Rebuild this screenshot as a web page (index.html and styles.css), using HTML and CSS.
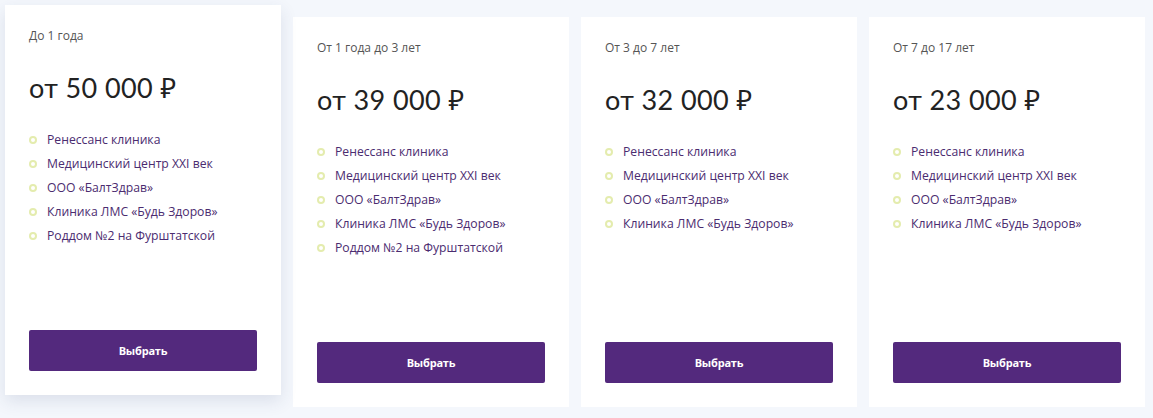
FILE: index.html
```html
<!DOCTYPE html>
<html lang="ru">
<head>
<meta charset="utf-8">
<link rel="stylesheet" href="styles.css">
</head>
<body>
<div class="plans">
  <div class="card card-active">
    <div class="label">До 1 года</div>
    <div class="price">от 50 000 ₽</div>
    <ul class="list">
      <li>Ренессанс клиника</li>
      <li>Медицинский центр XXI век</li>
      <li>ООО «БалтЗдрав»</li>
      <li>Клиника ЛМС «Будь Здоров»</li>
      <li>Роддом №2 на Фурштатской</li>
    </ul>
    <button class="btn">Выбрать</button>
  </div>
  <div class="card">
    <div class="label">От 1 года до 3 лет</div>
    <div class="price">от 39 000 ₽</div>
    <ul class="list">
      <li>Ренессанс клиника</li>
      <li>Медицинский центр XXI век</li>
      <li>ООО «БалтЗдрав»</li>
      <li>Клиника ЛМС «Будь Здоров»</li>
      <li>Роддом №2 на Фурштатской</li>
    </ul>
    <button class="btn">Выбрать</button>
  </div>
  <div class="card">
    <div class="label">От 3 до 7 лет</div>
    <div class="price">от 32 000 ₽</div>
    <ul class="list">
      <li>Ренессанс клиника</li>
      <li>Медицинский центр XXI век</li>
      <li>ООО «БалтЗдрав»</li>
      <li>Клиника ЛМС «Будь Здоров»</li>
    </ul>
    <button class="btn">Выбрать</button>
  </div>
  <div class="card">
    <div class="label">От 7 до 17 лет</div>
    <div class="price">от 23 000 ₽</div>
    <ul class="list">
      <li>Ренессанс клиника</li>
      <li>Медицинский центр XXI век</li>
      <li>ООО «БалтЗдрав»</li>
      <li>Клиника ЛМС «Будь Здоров»</li>
    </ul>
    <button class="btn">Выбрать</button>
  </div>
</div>
</body>
</html>
```

FILE: styles.css
```css
html, body {
  margin: 0;
  padding: 0;
  background: #f4f7fc;
  height: 100%;
}
body {
  font-family: "Open Sans", "Noto Sans", sans-serif;
}
.plans {
  display: flex;
  gap: 12px;
  padding: 17px 8px 11px 5px;
}
.card {
  width: 276px;
  height: 390px;
  box-sizing: border-box;
  background: #fff;
  padding: 24px;
  display: flex;
  flex-direction: column;
}
.card-active {
  transform: translateY(-12px);
  box-shadow: 0 6px 16px rgba(40, 60, 110, 0.12);
}
.label {
  font-size: 12px;
  line-height: 14px;
  color: #555;
  margin-bottom: 29px;
}
.price {
  font-family: "Lato", "Noto Sans", sans-serif;
  font-size: 27px;
  line-height: 32px;
  color: #222;
  letter-spacing: 0.4px;
}
.list {
  list-style: none;
  margin: 24px 0 0;
  padding: 0;
}
.list li {
  display: flex;
  align-items: center;
  gap: 10px;
  font-size: 12.2px;
  line-height: 24px;
  color: #4b2c70;
}
.list li::before {
  content: "";
  width: 4px;
  height: 4px;
  border: 2px solid #e4ecae;
  border-radius: 50%;
  flex: none;
}
.btn {
  margin-top: auto;
  width: 228px;
  height: 41px;
  border: none;
  border-radius: 2px;
  background: #53297d;
  color: #fff;
  font-family: "Open Sans", "Noto Sans", sans-serif;
  font-weight: 700;
  font-size: 11px;
  letter-spacing: -0.2px;
}
```
